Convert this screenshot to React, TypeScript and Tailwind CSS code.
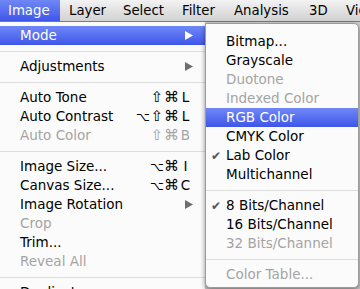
import React from "react";
import clsx from "clsx";

type Row =
    | { sep: true }
    | {
          sep?: false;
          label: string;
          mods?: string[];
          keyChar?: string;
          disabled?: boolean;
          arrow?: boolean;
          active?: boolean;
          checked?: boolean;
      };

const bar = [
    { label: "Image", w: "w-[60px]", pl: "pl-[8px]", active: true },
    { label: "Layer", w: "w-[55px]", pl: "pl-[9px]" },
    { label: "Select", w: "w-[59px]", pl: "pl-[8px]" },
    { label: "Filter", w: "w-[52px]", pl: "pl-[8px]" },
    { label: "Analysis", w: "w-[75px]", pl: "pl-[8px]" },
    { label: "3D", w: "w-[37px]", pl: "pl-[8px]" },
    { label: "View", w: "w-[60px]", pl: "pl-[8px]" },
];

const imageMenu: Row[] = [
    { label: "Mode", arrow: true, active: true },
    { sep: true },
    { label: "Adjustments", arrow: true },
    { sep: true },
    { label: "Auto Tone", mods: ["⇧", "⌘"], keyChar: "L" },
    { label: "Auto Contrast", mods: ["⌥", "⇧", "⌘"], keyChar: "L" },
    { label: "Auto Color", mods: ["⇧", "⌘"], keyChar: "B", disabled: true },
    { sep: true },
    { label: "Image Size...", mods: ["⌥", "⌘"], keyChar: "I" },
    { label: "Canvas Size...", mods: ["⌥", "⌘"], keyChar: "C" },
    { label: "Image Rotation", arrow: true },
    { label: "Crop", disabled: true },
    { label: "Trim..." },
    { label: "Reveal All", disabled: true },
    { sep: true },
    { label: "Duplicate..." },
];

const modeMenu: Row[] = [
    { label: "Bitmap..." },
    { label: "Grayscale" },
    { label: "Duotone", disabled: true },
    { label: "Indexed Color", disabled: true },
    { label: "RGB Color", active: true },
    { label: "CMYK Color" },
    { label: "Lab Color", checked: true },
    { label: "Multichannel" },
    { sep: true },
    { label: "8 Bits/Channel", checked: true },
    { label: "16 Bits/Channel" },
    { label: "32 Bits/Channel", disabled: true },
    { sep: true },
    { label: "Color Table...", disabled: true },
];

const highlight = "bg-gradient-to-b from-[#7187f6] to-[#3f55e9] text-white";

const Arrow = ({ white }: { white?: boolean }) => (
    <svg width="8" height="9" viewBox="0 0 8 9" className="shrink-0">
        <path d="M0 0 L8 4.5 L0 9 Z" fill={white ? "#ffffff" : "#6e6e6e"} />
    </svg>
);

const Separator = () => (
    <div className="flex h-[12px] items-center">
        <div className="h-px w-full bg-[#dedede]" />
    </div>
);

const MainItem = ({ row }: { row: Row }) => {
    if (row.sep) return <Separator />;
    return (
        <div
            className={clsx(
                "flex h-[19px] items-center pl-[20px] pr-[12px]",
                row.active ? highlight : row.disabled ? "text-[#a4a4a4]" : "text-black"
            )}
        >
            <span className="flex-1 whitespace-nowrap">{row.label}</span>
            {row.keyChar && (
                <div className="mr-[2px] flex items-center">
                    {row.mods?.map((m, i) => (
                        <span
                            key={i}
                            className={clsx(
                                "w-[14px] text-center",
                                m === "⌥" ? "text-[12px]" : "text-[15px]"
                            )}
                        >
                            {m}
                        </span>
                    ))}
                    <span className="ml-[2px] w-[11px] text-center">{row.keyChar}</span>
                </div>
            )}
            {row.arrow && <Arrow white={row.active} />}
        </div>
    );
};

const SubItem = ({ row }: { row: Row }) => {
    if (row.sep) return <Separator />;
    return (
        <div
            className={clsx(
                "flex h-[19px] items-center",
                row.active ? highlight : row.disabled ? "text-[#a4a4a4]" : "text-black"
            )}
        >
            <span className="w-[20px] pl-[5px] text-[12px] text-[#555555]">
                {row.checked ? "✔" : ""}
            </span>
            <span className="whitespace-nowrap">{row.label}</span>
        </div>
    );
};

export default function App() {
    return (
        <div className="relative h-[289px] w-[360px] overflow-hidden bg-[#cdcdcd] font-['DejaVu_Sans',sans-serif] text-[13.5px]">
            <div className="flex h-[22px] border-b border-[#7a7a7a] bg-gradient-to-b from-[#f2f2f2] to-[#d2d2d2]">
                {bar.map((b) => (
                    <div
                        key={b.label}
                        className={clsx(
                            "flex shrink-0 items-center whitespace-nowrap text-[13.3px]",
                            b.w,
                            b.pl,
                            b.active ? highlight : "text-black"
                        )}
                    >
                        {b.label}
                    </div>
                ))}
            </div>

            <div className="w-[205px] bg-[#fbfbfb] pt-[4px]">
                {imageMenu.map((row, i) => (
                    <MainItem key={i} row={row} />
                ))}
            </div>

            <div className="absolute left-[205px] top-[23px] w-[154px] rounded-b-[5px] rounded-tr-[5px] border border-[#9c9c9c] bg-[#fbfbfb] pb-[3px] pt-[8px] shadow-[0_2px_5px_rgba(0,0,0,0.45)]">
                {modeMenu.map((row, i) => (
                    <SubItem key={i} row={row} />
                ))}
            </div>
        </div>
    );
}
